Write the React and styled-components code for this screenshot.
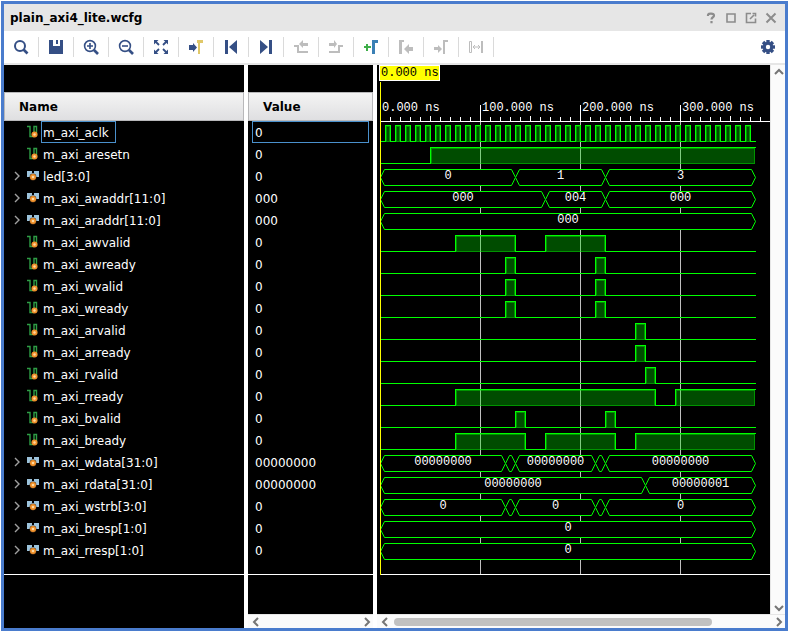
import React from 'react';
import styled, { createGlobalStyle } from 'styled-components';

const END = 375;
const ORIGIN = 3;
const ROW = 22;
const RULER = 56;
const BOTTOM = 509;

const clock = Array.from({ length: 37 }, (_, i) => [5 + i * 10, 10 + i * 10]);

const signals = [
  { name: 'm_axi_aclk', value: '0', high: clock, selected: true },
  { name: 'm_axi_aresetn', value: '0', high: [[50, END]] },
  { name: 'led[3:0]', value: '0', bus: [[0, 135, '0'], [135, 225, '1'], [225, END, '3']] },
  { name: 'm_axi_awaddr[11:0]', value: '000', bus: [[0, 165, '000'], [165, 225, '004'], [225, END, '000']] },
  { name: 'm_axi_araddr[11:0]', value: '000', bus: [[0, END, '000']] },
  { name: 'm_axi_awvalid', value: '0', high: [[75, 135], [165, 225]] },
  { name: 'm_axi_awready', value: '0', high: [[125, 135], [215, 225]] },
  { name: 'm_axi_wvalid', value: '0', high: [[125, 135], [215, 225]] },
  { name: 'm_axi_wready', value: '0', high: [[125, 135], [215, 225]] },
  { name: 'm_axi_arvalid', value: '0', high: [[255, 265]] },
  { name: 'm_axi_arready', value: '0', high: [[255, 265]] },
  { name: 'm_axi_rvalid', value: '0', high: [[265, 275]] },
  { name: 'm_axi_rready', value: '0', high: [[75, 275], [295, END]] },
  { name: 'm_axi_bvalid', value: '0', high: [[135, 145], [225, 235]] },
  { name: 'm_axi_bready', value: '0', high: [[75, 145], [165, 235], [255, END]] },
  { name: 'm_axi_wdata[31:0]', value: '00000000', bus: [[0, 125, '00000000'], [125, 135], [135, 215, '00000000'], [215, 225], [225, END, '00000000']] },
  { name: 'm_axi_rdata[31:0]', value: '00000000', bus: [[0, 265, '00000000'], [265, END, '00000001']] },
  { name: 'm_axi_wstrb[3:0]', value: '0', bus: [[0, 125, '0'], [125, 135], [135, 215, '0'], [215, 225], [225, END, '0']] },
  { name: 'm_axi_bresp[1:0]', value: '0', bus: [[0, END, '0']] },
  { name: 'm_axi_rresp[1:0]', value: '0', bus: [[0, END, '0']] },
];

const NAVY = '#354f85';
const GREY = '#bdbdbd';

const tools = [
  {
    label: 'Search',
    icon: <g fill="none" stroke={NAVY} strokeWidth="2"><circle cx="7" cy="7" r="5" /><path d="M10.5 10.5l4 4" strokeWidth="2.6" /></g>,
  },
  {
    label: 'Save',
    icon: <path fill={NAVY} d="M1 1h4v6h7V1h3v14H1zM8 1h2v4H8z" />,
  },
  {
    label: 'Zoom in',
    icon: <g fill="none" stroke={NAVY} strokeWidth="1.6"><circle cx="7" cy="7" r="5.4" /><path d="M7 4v6M4 7h6" /><path d="M11 11l4 4" strokeWidth="2.6" /></g>,
  },
  {
    label: 'Zoom out',
    icon: <g fill="none" stroke={NAVY} strokeWidth="1.6"><circle cx="7" cy="7" r="5.4" /><path d="M4 7h6" /><path d="M11 11l4 4" strokeWidth="2.6" /></g>,
  },
  {
    label: 'Zoom fit',
    icon: <g fill={NAVY} stroke={NAVY} strokeWidth="1.8"><path stroke="none" d="M1 1h4.500L1 5.500zM15 1v4.500L10.500 1zM1 15v-4.500L5.500 15zM15 15h-4.500l4.500-4.500z" /><path d="M2.500 2.500l3.500 3.500M13.500 2.500l-3.500 3.500M2.500 13.500l3.500-3.500M13.500 13.500l-3.500-3.500" /></g>,
  },
  {
    label: 'Go to cursor',
    icon: <g><path fill={NAVY} d="M1 6h4V4l4 4.500L5 13v-2H1z" /><path fill="#e0c869" d="M9 1h6v3h-3v11h-2V4H9z" /></g>,
  },
  {
    label: 'Previous transition',
    icon: <path fill={NAVY} d="M2 1h3v14H2zM14 1v14L6 8z" />,
  },
  {
    label: 'Next transition',
    icon: <path fill={NAVY} d="M11 1h3v14h-3zM2 1v14l8-7z" />,
  },
  {
    label: 'Swap to previous marker',
    disabled: true,
    icon: <g fill={GREY}><path d="M1 6h5v6h9v2H4V8H1z" /><path d="M6 5l4-4v3h5v3h-5v2z" /></g>,
  },
  {
    label: 'Swap to next marker',
    disabled: true,
    icon: <g fill={GREY}><path d="M15 6h-5v6H1v2h11V8h3z" /><path d="M9 5L6 1v3H1v3h5v2z" /></g>,
  },
  {
    label: 'Add marker',
    icon: <g><path fill="#3fae49" d="M3 5h2v2h3v2H5v3H3V9H1V7h2z" /><path fill="#3b80b5" d="M9 1h6v3h-3v11H9z" /></g>,
  },
  {
    label: 'Previous marker',
    disabled: true,
    icon: <g fill={GREY}><path d="M1 1h5v2H4v12H1z" /><path d="M6 10l5-5v3h4v4h-4v3z" /></g>,
  },
  {
    label: 'Next marker',
    disabled: true,
    icon: <g fill={GREY}><path d="M10 1h5v2h-3v12h-2z" /><path d="M9 10L5 6v2H1v3h4v3z" /></g>,
  },
  {
    label: 'Measure span',
    disabled: true,
    icon: <g fill="none" stroke={GREY}><path d="M1.500 2.500h2v11h-2zM14 2v12" /><path d="M14 2v12" strokeWidth="2" /><path d="M5 8h7M7 6L5 8l2 2M10 6l2 2-2 2" /></g>,
  },
];

const GearIcon = () => (
  <svg width="16" height="16" viewBox="-8 -8 16 16" aria-hidden="true">
    <g fill={NAVY}>
      {[0, 45, 90, 135].map((a) => (
        <rect key={a} x="-1.700" y="-7" width="3.400" height="14" transform={`rotate(${a})`} />
      ))}
    </g>
    <circle r="5.200" fill={NAVY} />
    <circle r="2.200" fill="#fff" />
  </svg>
);

const windowActions = [
  { label: 'Help', icon: <path d="M5 6V5C5 3 11 3 11 5.500C11 7.500 8.500 7 8.500 9.500M8.500 11v2.200" strokeWidth="2.200" /> },
  { label: 'Maximize', icon: <path d="M4 4h8v8H4z" strokeWidth="1.600" /> },
  { label: 'Float', icon: <path d="M8 3.500H3.500v9h9V8.500M7 9l4-4M9.500 3.500h3v3" strokeWidth="1.600" /> },
  { label: 'Close', icon: <path d="M3.500 3.500l9 9M12.500 3.500l-9 9" strokeWidth="2" /> },
];

const ScalarIcon = () => (
  <svg width="14" height="14" viewBox="0 0 14 14" aria-hidden="true">
    <path d="M1 1.500h3v10h4M8 10V1.500h2.500V11" fill="none" stroke="#2e9e46" strokeWidth="1.400" />
    <circle cx="8.500" cy="9.500" r="3" fill="#f0902a" />
    <circle cx="8.500" cy="9.500" r="1.200" fill="#ffd9a0" />
  </svg>
);

const BusIcon = () => (
  <svg width="14" height="14" viewBox="0 0 14 14" aria-hidden="true">
    <path d="M1 2h5v2h2V2h5v6H1z" fill="#9cc3dc" />
    <circle cx="7" cy="8" r="3.400" fill="#5a3a1a" />
    <circle cx="7" cy="8" r="3" fill="#f0902a" />
    <circle cx="7" cy="8" r="1.300" fill="#ffd9a0" />
  </svg>
);

const arrows = {
  left: 'M9 3L5 7l4 4',
  right: 'M5 3l4 4-4 4',
  up: 'M3 9l4-4 4 4',
  down: 'M3 5l4 4 4-4',
};

const Arrow = ({ dir, width = 2 }) => (
  <svg width="14" height="14" viewBox="0 0 14 14" aria-hidden="true">
    <path d={arrows[dir]} fill="none" stroke="currentColor" strokeWidth={width} />
  </svg>
);

const Pulse = ({ from, to, top }) => {
  const x = ORIGIN + from;
  const w = to - from;
  const open = to === END;
  return (
    <g>
      <rect x={x} y={top} width={w} height="17" fill="rgba(0, 230, 0, 0.33)" />
      <path
        d={`M${x + 1.5} ${top + 16.5}V${top + 1.5}H${x + w - 0.5}V${top + 16.5}z`}
        fill="none"
        stroke="rgba(0, 255, 0, 0.4)"
      />
      <path
        d={`M${x + 0.5} ${top + 17}V${top + 0.5}H${x + w + (open ? 1 : 0.5)}${open ? '' : `V${top + 17}`}`}
        fill="none"
        stroke="#00ff00"
      />
    </g>
  );
};

const ScalarWave = ({ high, top }) => {
  // low level runs between the pulses
  const lows = [];
  let at = 0;
  high.forEach(([from, to]) => {
    lows.push([at, from]);
    at = to;
  });
  if (at < END) lows.push([at, END]);
  return (
    <g>
      {high.map(([from, to]) => <Pulse key={from} from={from} to={to} top={top} />)}
      {lows.map(([from, to]) => (
        <rect key={from} x={ORIGIN + from} y={top + 16} width={to - from + 1} height="1" fill="#00ff00" />
      ))}
    </g>
  );
};

const BusWave = ({ bus, top }) => (
  <g>
    {bus.map(([from, to, text]) => {
      const a = ORIGIN + from + 0.5;
      const b = ORIGIN + to + 0.5;
      const t = top + 0.5;
      return (
        <g key={from}>
          <path
            d={`M${a} ${t + 8}L${a + 4} ${t}H${b - 4}L${b} ${t + 8}L${b - 4} ${t + 16}H${a + 4}L${a} ${t + 8}`}
            fill="#000"
            stroke="#00ff00"
            strokeLinejoin="bevel"
            shapeRendering="geometricPrecision"
          />
          {text && <WaveText x={ORIGIN + (from + to + 1) / 2} y={top + 10} textAnchor="middle">{text}</WaveText>}
        </g>
      );
    })}
  </g>
);

const Waveform = () => (
  <WaveSvg role="img" aria-label="Signal waveforms">
    {[100, 200, 300].map((t) => (
      <rect key={t} x={ORIGIN + t} y={RULER} width="1" height={BOTTOM - RULER} fill="#bfbfbf" />
    ))}
    {signals.map((s, i) => {
      const top = RULER + i * ROW + 4;
      return s.bus
        ? <BusWave key={s.name} bus={s.bus} top={top} />
        : <ScalarWave key={s.name} high={s.high} top={top} />;
    })}
    <rect x={ORIGIN} y={RULER} width="100%" height="1" fill="#fff" />
    <rect x={ORIGIN} y={BOTTOM} width="100%" height="1" fill="#fff" />
    {Array.from({ length: 38 }, (_, i) => (i + 1) * 10).map((t) => {
      const h = t % 100 === 0 ? 16 : t % 50 === 0 ? 5 : 4;
      return <rect key={t} x={ORIGIN + t} y={RULER - h} width="1" height={h} fill="#fff" />;
    })}
    {[0, 100, 200, 300].map((t) => (
      <WaveText key={t} x={ORIGIN + t + 2} y="46">{`${t}.000 ns`}</WaveText>
    ))}
    <rect x={ORIGIN} y="17" width="1" height={BOTTOM - 16} fill="#ffff00" />
    <rect x="2" y="0" width="61" height="16" fill="#fff" />
    <rect x="3" y="1" width="59" height="14" fill="#ffff00" />
    <WaveText x="4" y="11" $dark>0.000 ns</WaveText>
  </WaveSvg>
);

const NamePane = () => (
  <NameColumn>
    <PaneTop />
    <Table>
      <thead>
        <tr><HeadCell scope="col">Name</HeadCell></tr>
      </thead>
      <tbody>
        {signals.map((s) => (
          <tr key={s.name}>
            <BodyCell>
              <NameRow>
                {s.bus
                  ? <Expander aria-label={`Expand ${s.name}`}><Arrow dir="right" width={1.4} /></Expander>
                  : <Spacer />}
                {s.bus ? <BusIcon /> : <ScalarIcon />}
                <SignalName $selected={s.selected}>{s.name}</SignalName>
              </NameRow>
            </BodyCell>
          </tr>
        ))}
      </tbody>
    </Table>
    <ListEnd />
  </NameColumn>
);

const ValuePane = () => (
  <ValueColumn>
    <PaneTop />
    <Table>
      <thead>
        <tr><HeadCell scope="col">Value</HeadCell></tr>
      </thead>
      <tbody>
        {signals.map((s) => (
          <tr key={s.name}>
            <BodyCell><SignalValue $selected={s.selected}>{s.value}</SignalValue></BodyCell>
          </tr>
        ))}
      </tbody>
    </Table>
    <ListEnd />
    <Fill />
    <HorizontalScroll>
      <ScrollButton aria-label="Scroll values left"><Arrow dir="left" /></ScrollButton>
      <ScrollButton aria-label="Scroll values right"><Arrow dir="right" /></ScrollButton>
    </HorizontalScroll>
  </ValueColumn>
);

const WavePane = () => (
  <WaveColumn>
    <WaveArea>
      <Canvas><Waveform /></Canvas>
      <VerticalScroll>
        <ScrollButton aria-label="Scroll up"><Arrow dir="up" /></ScrollButton>
        <ScrollButton aria-label="Scroll down"><Arrow dir="down" /></ScrollButton>
      </VerticalScroll>
    </WaveArea>
    <HorizontalScroll>
      <ScrollButton aria-label="Scroll waves left"><Arrow dir="left" /></ScrollButton>
      <Track><Thumb /></Track>
      <ScrollButton aria-label="Scroll waves right"><Arrow dir="right" /></ScrollButton>
    </HorizontalScroll>
  </WaveColumn>
);

const App = () => {
  return <>
    <GlobalStyle />
    <Frame>
      <TitleBar>
        <Title>plain_axi4_lite.wcfg</Title>
        {windowActions.map((a) => (
          <WindowButton key={a.label} aria-label={a.label}>
            <svg width="16" height="16" viewBox="0 0 16 16" fill="none" stroke="#8c8c8c" aria-hidden="true">{a.icon}</svg>
          </WindowButton>
        ))}
      </TitleBar>
      <Toolbar role="toolbar" aria-label="Waveform tools">
        {tools.map((t) => (
          <ToolButton key={t.label} aria-label={t.label} disabled={t.disabled}>
            <svg width="16" height="16" viewBox="0 0 16 16" aria-hidden="true">{t.icon}</svg>
          </ToolButton>
        ))}
        <SettingsButton aria-label="Settings"><GearIcon /></SettingsButton>
      </Toolbar>
      <Panes>
        <NamePane />
        <ValuePane />
        <WavePane />
      </Panes>
    </Frame>
  </>
}

export default App;

const GlobalStyle = createGlobalStyle`
  * {
    box-sizing: border-box;
  }
  body {
    margin: 0;
    padding: 1px;
    background: #fff;
    font-family: "DejaVu Sans", Verdana, sans-serif;
    font-size: 12px;
  }
  button {
    display: flex;
    align-items: center;
    justify-content: center;
    padding: 0;
    border: 0;
    background: none;
  }
  svg {
    display: block;
    flex: none;
  }
`;

const Frame = styled.div`
  display: flex;
  flex-direction: column;
  min-height: calc(100vh - 2px);
  border: 3px solid #4a7ccd;
`;

const TitleBar = styled.header`
  display: flex;
  align-items: center;
  height: 27px;
  padding: 0 4px 0 6px;
  background: #e6e6e6;
`;

const Title = styled.h1`
  flex: 1;
  margin: 0;
  font-size: 12px;
  font-weight: bold;
  color: #000;
`;

const WindowButton = styled.button`
  width: 20px;
  height: 20px;
`;

const Toolbar = styled.div`
  display: flex;
  align-items: center;
  height: 34px;
  background: #fff;
  border-bottom: 2px solid #e6e6e6;
`;

const ToolButton = styled.button`
  width: 35px;
  height: 20px;
  && {
    border-right: 1px solid #dadada;
  }
`;

const SettingsButton = styled.button`
  width: 34px;
  height: 20px;
  margin-left: auto;
`;

const Panes = styled.main`
  flex: 1;
  display: flex;
  gap: 4px;
  background: #fff;
`;

const Column = styled.section`
  display: flex;
  flex-direction: column;
  background: #000;
  color: #fff;
`;

const NameColumn = styled(Column)`
  flex: 0 0 240px;
`;

const ValueColumn = styled(Column)`
  flex: 0 0 125px;
`;

const WaveColumn = styled(Column)`
  flex: 1;
  min-width: 0;
`;

const PaneTop = styled.div`
  height: 27px;
`;

const Table = styled.table`
  width: 100%;
  border-collapse: separate;
  border-spacing: 0;
`;

const HeadCell = styled.th`
  height: 29px;
  padding: 0 14px;
  border: 1px solid #b8b8ba;
  background: linear-gradient(#f4f4f4, #dfdfe1);
  color: #000;
  font-weight: bold;
  text-align: left;
`;

const BodyCell = styled.td`
  height: ${ROW}px;
  padding: 0;
`;

const NameRow = styled.div`
  display: flex;
  align-items: center;
  height: ${ROW}px;
  padding-left: 6px;
`;

const Expander = styled.button`
  width: 14px;
  height: 14px;
  margin-right: 2px;
  color: #a0a0a0;
`;

const Spacer = styled.span`
  width: 16px;
`;

const SignalName = styled.span`
  height: ${ROW}px;
  margin-left: 1px;
  padding: 0 6px 0 1px;
  border: 1px solid ${(props) => (props.$selected ? '#4a90cc' : 'transparent')};
  line-height: 22px;
`;

const SignalValue = styled.div`
  height: ${ROW}px;
  margin: 0 4px;
  padding: 0 2px;
  border: 1px solid ${(props) => (props.$selected ? '#4a90cc' : 'transparent')};
  line-height: 22px;
`;

const ListEnd = styled.div`
  height: 14px;
  border-bottom: 1px solid #fff;
`;

const Fill = styled.div`
  flex: 1;
`;

const WaveArea = styled.div`
  flex: 1;
  display: flex;
`;

const Canvas = styled.div`
  flex: 1;
  min-width: 0;
`;

const WaveSvg = styled.svg`
  width: 100%;
  height: 510px;
  shape-rendering: crispEdges;
`;

const WaveText = styled.text`
  font-family: "Liberation Mono", "Courier New", monospace;
  font-size: 12px;
  fill: ${(props) => (props.$dark ? '#000' : '#fff')};
`;

const VerticalScroll = styled.div`
  display: flex;
  flex-direction: column;
  justify-content: space-between;
  align-items: center;
  width: 15px;
  border-left: 1px solid #e6e6e6;
  background: #fbfbfb;
`;

const HorizontalScroll = styled.div`
  display: flex;
  justify-content: space-between;
  align-items: center;
  height: 14px;
  border-top: 1px solid #e6e6e6;
  background: #fbfbfb;
`;

const ScrollButton = styled.button`
  width: 14px;
  height: 13px;
  color: #757575;
  && {
    padding-left: 2px;
  }
`;

const Track = styled.div`
  flex: 1;
  padding: 0 3px;
`;

const Thumb = styled.div`
  width: 85%;
  height: 8px;
  border-radius: 4px;
  background: #c1c1c1;
`;
